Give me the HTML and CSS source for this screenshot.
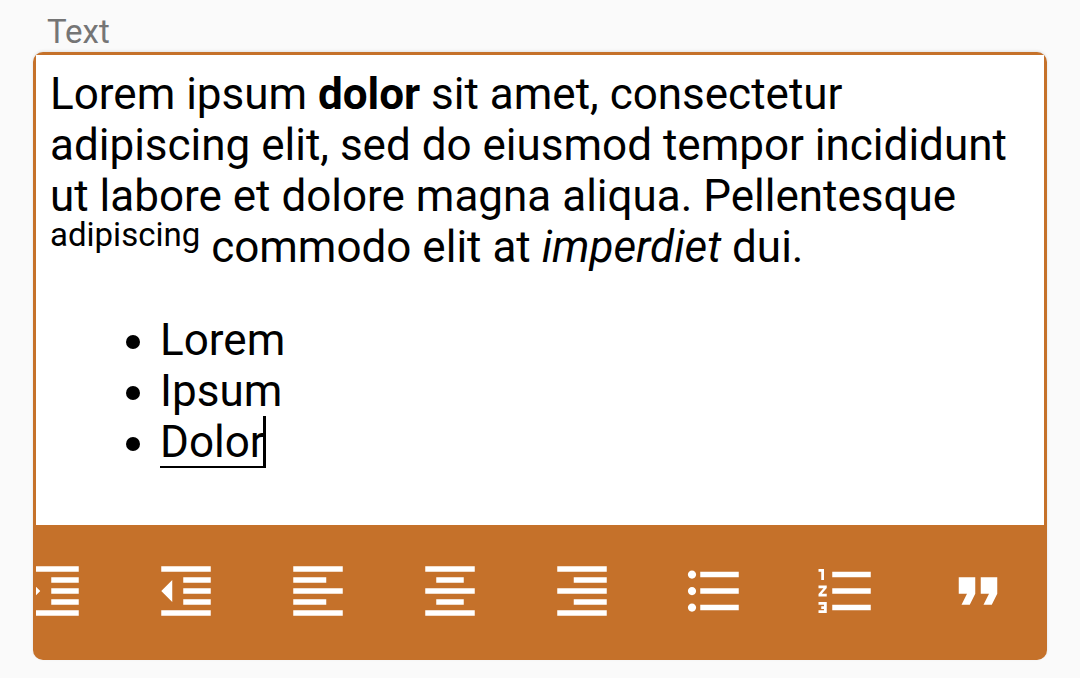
FILE: index.html
```html
<!DOCTYPE html>
<html lang="en">
<head>
<meta charset="utf-8">
<meta name="viewport" content="width=device-width, initial-scale=1">
<title>Text</title>
<link rel="stylesheet" href="styles.css">
</head>
<body>
<main class="field">
  <div class="label" id="text-label">Text</div>
  <div class="editor">
    <div class="content" contenteditable="true" role="textbox" aria-multiline="true" aria-labelledby="text-label" spellcheck="false">
      <p>Lorem ipsum <b>dolor</b> sit amet, consectetur adipiscing elit, sed do eiusmod tempor incididunt ut labore et dolore magna aliqua. Pellentesque <sup>adipiscing</sup> commodo elit at <i>imperdiet</i> dui.</p>
      <ul>
        <li>Lorem</li>
        <li>Ipsum</li>
        <li><span class="composing">Dolor</span></li>
      </ul>
    </div>
    <div class="toolbar" role="toolbar" aria-label="Formatting">
      <button type="button" aria-label="Increase indent"><svg viewBox="0 0 24 24"><path d="M3 21h18v-2H3v2zM3 8v8l4-4-4-4zm8 9h10v-2H11v2zM3 3v2h18V3H3zm8 6h10V7H11v2zm0 4h10v-2H11v2z"/></svg></button>
      <button type="button" aria-label="Decrease indent"><svg viewBox="0 0 24 24"><path d="M11 17h10v-2H11v2zm-8-5l4 4V8l-4 4zm0 9h18v-2H3v2zM3 3v2h18V3H3zm8 6h10V7H11v2zm0 4h10v-2H11v2z"/></svg></button>
      <button type="button" aria-label="Align left"><svg viewBox="0 0 24 24"><path d="M15 15H3v2h12v-2zm0-8H3v2h12V7zM3 13h18v-2H3v2zm0 8h18v-2H3v2zM3 3v2h18V3H3z"/></svg></button>
      <button type="button" aria-label="Align center"><svg viewBox="0 0 24 24"><path d="M7 15v2h10v-2H7zm-4 6h18v-2H3v2zm0-8h18v-2H3v2zm4-6v2h10V7H7zM3 3v2h18V3H3z"/></svg></button>
      <button type="button" aria-label="Align right"><svg viewBox="0 0 24 24"><path d="M3 21h18v-2H3v2zm6-4h12v-2H9v2zm-6-4h18v-2H3v2zm6-4h12V7H9v2zM3 3v2h18V3H3z"/></svg></button>
      <button type="button" aria-label="Bulleted list"><svg viewBox="0 0 24 24"><path d="M4 10.500c-.83 0-1.500.67-1.500 1.500s.67 1.500 1.500 1.500 1.500-.67 1.500-1.500-.67-1.500-1.500-1.500zm0-6c-.83 0-1.500.67-1.500 1.500S3.170 7.500 4 7.500 5.500 6.830 5.500 6 4.830 4.500 4 4.500zm0 12c-.83 0-1.500.68-1.500 1.500s.68 1.500 1.500 1.500 1.500-.68 1.500-1.500-.67-1.500-1.500-1.500zM7 19h14v-2H7v2zm0-6h14v-2H7v2zm0-8v2h14V5H7z"/></svg></button>
      <button type="button" aria-label="Numbered list"><svg viewBox="0 0 24 24"><path d="M2 17h2v.5H3v1h1v.5H2v1h3v-4H2v1zm1-9h1V4H2v1h1v3zm-1 3h1.800L2 13.100v.9h3v-1H3.200L5 10.900V10H2v1zm5-6v2h14V5H7zm0 14h14v-2H7v2zm0-6h14v-2H7v2z"/></svg></button>
      <button type="button" aria-label="Quote"><svg viewBox="0 0 24 24"><path d="M6 17h3l2-4V7H5v6h3zm8 0h3l2-4V7h-6v6h3z"/></svg></button>
    </div>
  </div>
</main>
</body>
</html>
```
FILE: styles.css
```css
body {
  margin: 0;
  background: #fafafa;
  font-family: Roboto, sans-serif;
}

.field {
  padding: 12px 33px 18px;
}

.label {
  padding-left: 14px;
  color: #757575;
  font-size: 33px;
  line-height: 40px;
}

.editor {
  padding: 3px;
  border-radius: 10px;
  background: #c5712a;
  box-shadow: 0 -1px 3px rgba(0, 0, 0, 0.1);
}

.content {
  min-height: 440px;
  padding: 14px 14px 16px;
  background: #fff;
  color: #000;
  font-size: 44px;
  line-height: 51px;
  outline: none;
}

.content p {
  margin: 0;
}

.content sup {
  font-size: 33px;
  line-height: 0;
  vertical-align: 16px;
}

.content ul {
  margin: 42px 0 0;
  padding-left: 110px;
}

/* Underline of the word being typed, with the text cursor at its end */
.composing {
  padding-right: 1px;
  box-shadow: inset -3px 0 #000, inset 0 -2px #000;
}

.toolbar {
  display: flex;
  justify-content: flex-end;
  overflow: hidden;
}

.toolbar button {
  display: flex;
  flex: 0 0 132px;
  align-items: center;
  justify-content: center;
  height: 132px;
  padding: 0;
  border: 0;
  background: transparent;
  color: #fff;
}

.toolbar svg {
  width: 66px;
  height: 66px;
  fill: currentColor;
}
```
